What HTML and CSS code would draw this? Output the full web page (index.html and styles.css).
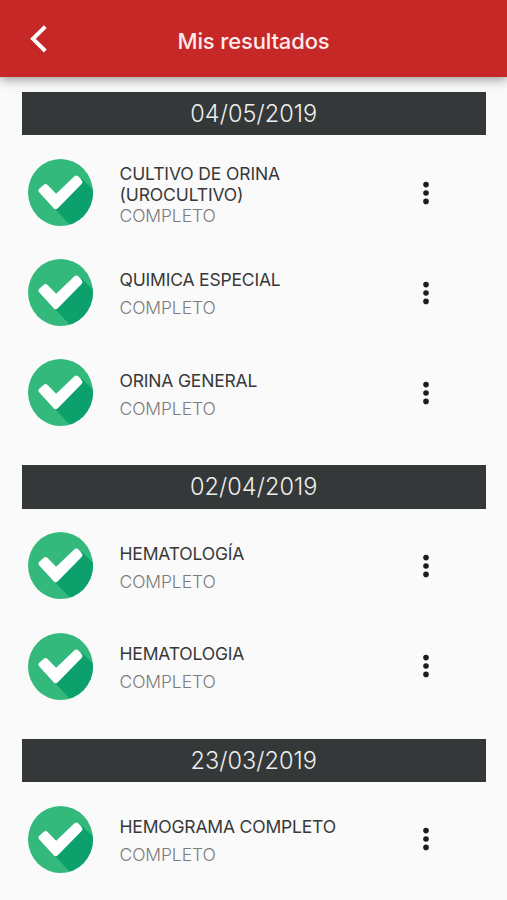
FILE: index.html
```html
<!DOCTYPE html>
<html lang="es">
<head>
<meta charset="utf-8">
<title>Mis resultados</title>
<link rel="stylesheet" href="styles.css">
</head>
<body>
<svg class="defs" width="0" height="0" aria-hidden="true">
  <clipPath id="disc"><ellipse cx="32.5" cy="33.5" rx="32.5" ry="33.5"/></clipPath>
  <symbol id="check" viewBox="0 0 65 67">
    <ellipse cx="32.5" cy="33.5" rx="32.5" ry="33.5" fill="#33b97c"/>
    <path d="M26 49 53.5 19.5 80 45 60 85 Z" fill="#0ca06c" clip-path="url(#disc)"/>
    <path d="M13.4 31.6 17.6 28 28 38.8 48.4 19.4 51.6 23.1 27.8 47.4 Z" fill="#fff" stroke="#fff" stroke-width="5.6" stroke-linejoin="round"/>
  </symbol>
  <symbol id="more" viewBox="0 0 8 24">
    <circle cx="4" cy="3.6" r="2.8"/><circle cx="4" cy="12" r="2.8"/><circle cx="4" cy="20.4" r="2.8"/>
  </symbol>
</svg>
<header class="topbar">
  <svg class="back" viewBox="0 0 18 28"><path d="M15.3 1.6 3 13.8 15.3 26"/></svg>
  <h1 class="title">Mis resultados</h1>
</header>
<main class="results">
  <section class="group">
    <h2 class="date">04/05/2019</h2>
    <article class="row">
      <svg class="check"><use href="#check"/></svg>
      <div class="text tight"><p class="name">CULTIVO DE ORINA (UROCULTIVO)</p><p class="status">COMPLETO</p></div>
      <svg class="more"><use href="#more"/></svg>
    </article>
    <article class="row">
      <svg class="check"><use href="#check"/></svg>
      <div class="text"><p class="name">QUIMICA ESPECIAL</p><p class="status">COMPLETO</p></div>
      <svg class="more"><use href="#more"/></svg>
    </article>
    <article class="row">
      <svg class="check"><use href="#check"/></svg>
      <div class="text"><p class="name">ORINA GENERAL</p><p class="status">COMPLETO</p></div>
      <svg class="more"><use href="#more"/></svg>
    </article>
  </section>
  <section class="group">
    <h2 class="date">02/04/2019</h2>
    <article class="row">
      <svg class="check"><use href="#check"/></svg>
      <div class="text"><p class="name">HEMATOLOGÍA</p><p class="status">COMPLETO</p></div>
      <svg class="more"><use href="#more"/></svg>
    </article>
    <article class="row">
      <svg class="check"><use href="#check"/></svg>
      <div class="text"><p class="name">HEMATOLOGIA</p><p class="status">COMPLETO</p></div>
      <svg class="more"><use href="#more"/></svg>
    </article>
  </section>
  <section class="group">
    <h2 class="date">23/03/2019</h2>
    <article class="row">
      <svg class="check"><use href="#check"/></svg>
      <div class="text"><p class="name">HEMOGRAMA COMPLETO</p><p class="status">COMPLETO</p></div>
      <svg class="more"><use href="#more"/></svg>
    </article>
  </section>
</main>
</body>
</html>
```
FILE: styles.css
```css
* { box-sizing: border-box; margin: 0; padding: 0; }
body {
  height: 900px;
  overflow: hidden;
  background: #fafafa;
  color: #383838;
  font-family: Inter, "Liberation Sans", sans-serif;
}
.defs { position: absolute; }
.topbar {
  display: grid;
  grid-template-columns: 60px 1fr 60px;
  height: 77.4px;
  padding-top: 4px;
  align-items: center;
  background: #c62828;
  box-shadow: 0 3px 10px rgba(0, 0, 0, .38);
}
.back {
  width: 18px;
  height: 28px;
  margin: -4px 0 0 30px;
  fill: none;
  stroke: #fff;
  stroke-width: 4;
}
.title {
  color: #fdeaea;
  font-size: 22px;
  font-weight: 500;
  line-height: 28px;
  text-align: center;
  letter-spacing: -.15px;
}
.results { padding: 14.6px 21.5px 0 22px; }
.group { margin-bottom: 22.5px; }
.date {
  height: 43.5px;
  margin-bottom: 7px;
  background: #343838;
  color: #eee;
  font-size: 23.5px;
  font-weight: 300;
  line-height: 44px;
  text-align: center;
  letter-spacing: .05px;
}
.row {
  display: grid;
  grid-template-columns: 65px 260px 8px;
  height: 100.15px;
  padding-left: 5.5px;
  align-items: center;
}
.check { width: 65px; height: 67px; }
.text { padding: 2.5px 0 0 27px; }
.tight { padding-top: 3px; }
.name, .status {
  font-size: 17.5px;
  font-weight: 380;
  line-height: 21px;
  letter-spacing: -.18px;
}
.status { margin-top: 7px; color: #7c7c7c; font-weight: 330; letter-spacing: -.1px; }
.tight .name { letter-spacing: -.12px; }
.tight .status { margin-top: 0; }
.more { width: 8px; height: 24px; margin-left: 69px; fill: #1d1d1d; }
```
